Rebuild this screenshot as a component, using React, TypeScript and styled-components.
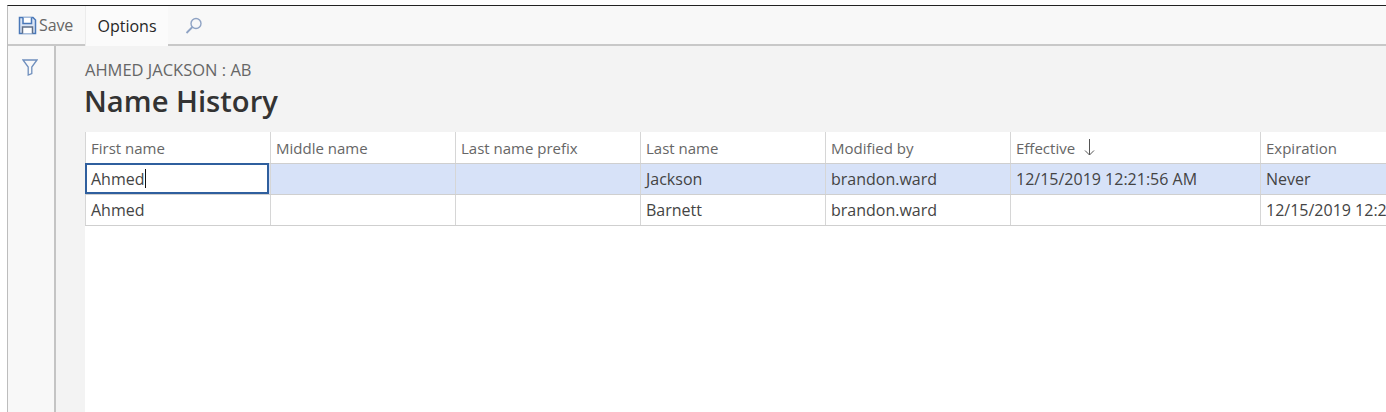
import React from 'react';
import styled, { createGlobalStyle } from 'styled-components';

const GlobalStyle = createGlobalStyle`
  html, body {
    margin: 0;
    height: 100%;
    background: #ffffff;
    overflow: hidden;
  }
  #root {
    height: 100%;
  }
`;

const Page = styled.div`
  width: 1386px;
  height: 412px;
  padding: 5px 0 0 7px;
  box-sizing: border-box;
  display: flex;
  flex-direction: column;
  overflow: hidden;
  font-family: 'Open Sans', 'Noto Sans', sans-serif;
  color: #333;
  background: #fff;
`;

const Frame = styled.div`
  flex: 1;
  display: flex;
  flex-direction: column;
  min-height: 0;
  border-top: 1px solid #222;
  border-left: 1px solid #bdbdbd;
`;

const Toolbar = styled.div`
  height: 40px;
  flex: none;
  box-sizing: border-box;
  display: flex;
  align-items: stretch;
  background: #f8f8f8;
  border-bottom: 2px solid #c8c8c8;
`;

const SaveButton = styled.div`
  width: 77px;
  display: flex;
  align-items: center;
  padding-left: 10px;
  gap: 2px;
  box-sizing: border-box;
  font-size: 16px;
  color: #666;
  letter-spacing: -0.1px;
`;

const OptionsTab = styled.div`
  width: 83px;
  height: 40px;
  display: flex;
  align-items: center;
  justify-content: center;
  box-sizing: border-box;
  background: #fbfbfb;
  border-left: 1px solid #ececec;
  font-size: 16px;
  font-weight: 400;
  color: #262626;
`;

const SearchButton = styled.div`
  display: flex;
  align-items: center;
  padding: 2px 0 0 16px;
`;

const Body = styled.div`
  flex: 1;
  display: flex;
  min-height: 0;
`;

const Sidebar = styled.div`
  width: 48px;
  flex: none;
  display: flex;
  justify-content: center;
  padding: 13px 2px 0 0;
  box-sizing: border-box;
  background: #f8f8f8;
  border-right: 2px solid #c4c4c4;
`;

const Content = styled.div`
  flex: 1;
  min-width: 0;
  display: flex;
  flex-direction: column;
  background: #f3f3f3;
  padding-left: 29px;
`;

const Heading = styled.div`
  height: 86px;
  flex: none;
  padding-top: 14px;
  box-sizing: border-box;
`;

const Breadcrumb = styled.div`
  font-size: 16.5px;
  line-height: 19px;
  color: #666;
`;

const Title = styled.h1`
  margin: 4px 0 0 -1px;
  font-size: 29.2px;
  line-height: 36px;
  font-weight: 600;
  color: #333;
`;

const Grid = styled.div`
  flex: 1;
  background: #fff;
  overflow: hidden;
`;

const Row = styled.div<{ $selected?: boolean; $header?: boolean }>`
  display: flex;
  width: 1400px;
  height: ${({ $header }) => ($header ? '32px' : '31px')};
  box-sizing: border-box;
  background: ${({ $selected }) => ($selected ? '#d7e2f8' : '#fff')};
  border-bottom: 1px solid #cfcfcf;
  font-size: ${({ $header }) => ($header ? '15px' : '16px')};
  color: ${({ $header }) => ($header ? '#666' : '#444')};
`;

const Cell = styled.div<{ $width: number }>`
  width: ${({ $width }) => $width}px;
  flex: none;
  display: flex;
  align-items: center;
  gap: 9px;
  padding-left: 5px;
  box-sizing: border-box;
  border-left: 1px solid #d6d6d6;
  white-space: nowrap;
`;

const ActiveCell = styled(Cell)`
  background: #fff;
  border: 2px solid #2f5f9e;
  padding-left: 4px;
  gap: 0;
  margin: -1px 1px -1px 0;
  width: 184px;
  height: 31px;
`;

const Caret = styled.span`
  display: inline-block;
  width: 1px;
  height: 19px;
  background: #111;
`;

const SaveIcon = () => (
  <svg width="19" height="19" viewBox="0 0 19 19" fill="none" stroke="#4a78b8" strokeWidth="1.5">
    <path d="M1.5 1.5h13.5l2.5 2.5v13.5h-16z" fill="#dbe5f4" />
    <path d="M5 1.5v6h8.5v-6" fill="#fff" />
    <path d="M4.5 17.5v-6.5h10v6.5" stroke="#5f6f88" fill="#fff" />
  </svg>
);

const SearchIcon = () => (
  <svg width="20" height="20" viewBox="0 0 20 20" fill="none" stroke="#8fa3c4" strokeWidth="1.4">
    <circle cx="12" cy="7.5" r="5" />
    <path d="M8.4 11 2.5 17" strokeWidth="1.8" />
  </svg>
);

const FilterIcon = () => (
  <svg width="16" height="17" viewBox="0 0 16 17" fill="none" stroke="#6f8fbd" strokeWidth="1.3">
    <path d="M1 1h14L9.8 8v6.5l-3.6 1.5V8z" />
  </svg>
);

const SortArrow = () => (
  <svg width="11" height="17" viewBox="0 0 11 17" fill="none" stroke="#555" strokeWidth="1">
    <path d="M5.5 0v16M1 11.5 5.5 16 10 11.5" />
  </svg>
);

const widths = [185, 185, 185, 185, 185, 250, 225];
const headers = ['First name', 'Middle name', 'Last name prefix', 'Last name', 'Modified by', 'Effective', 'Expiration'];
const rows = [
  ['Ahmed', '', '', 'Jackson', 'brandon.ward', '12/15/2019 12:21:56 AM', 'Never'],
  ['Ahmed', '', '', 'Barnett', 'brandon.ward', '', '12/15/2019 12:2'],
];

export default function App() {
  return (
    <Page>
      <GlobalStyle />
      <Frame>
        <Toolbar>
          <SaveButton>
            <SaveIcon />
            Save
          </SaveButton>
          <OptionsTab>Options</OptionsTab>
          <SearchButton>
            <SearchIcon />
          </SearchButton>
        </Toolbar>
        <Body>
          <Sidebar>
            <FilterIcon />
          </Sidebar>
          <Content>
            <Heading>
              <Breadcrumb>AHMED JACKSON : AB</Breadcrumb>
              <Title>Name History</Title>
            </Heading>
            <Grid>
              <Row $header>
                {headers.map((h, i) => (
                  <Cell key={h} $width={widths[i]}>
                    {h}
                    {h === 'Effective' && <SortArrow />}
                  </Cell>
                ))}
              </Row>
              {rows.map((row, r) => (
                <Row key={r} $selected={r === 0}>
                  {row.map((value, i) =>
                    r === 0 && i === 0 ? (
                      <ActiveCell key={i} $width={widths[i]}>
                        {value}
                        <Caret />
                      </ActiveCell>
                    ) : (
                      <Cell key={i} $width={widths[i]}>
                        {value}
                      </Cell>
                    ),
                  )}
                </Row>
              ))}
            </Grid>
          </Content>
        </Body>
      </Frame>
    </Page>
  );
}
